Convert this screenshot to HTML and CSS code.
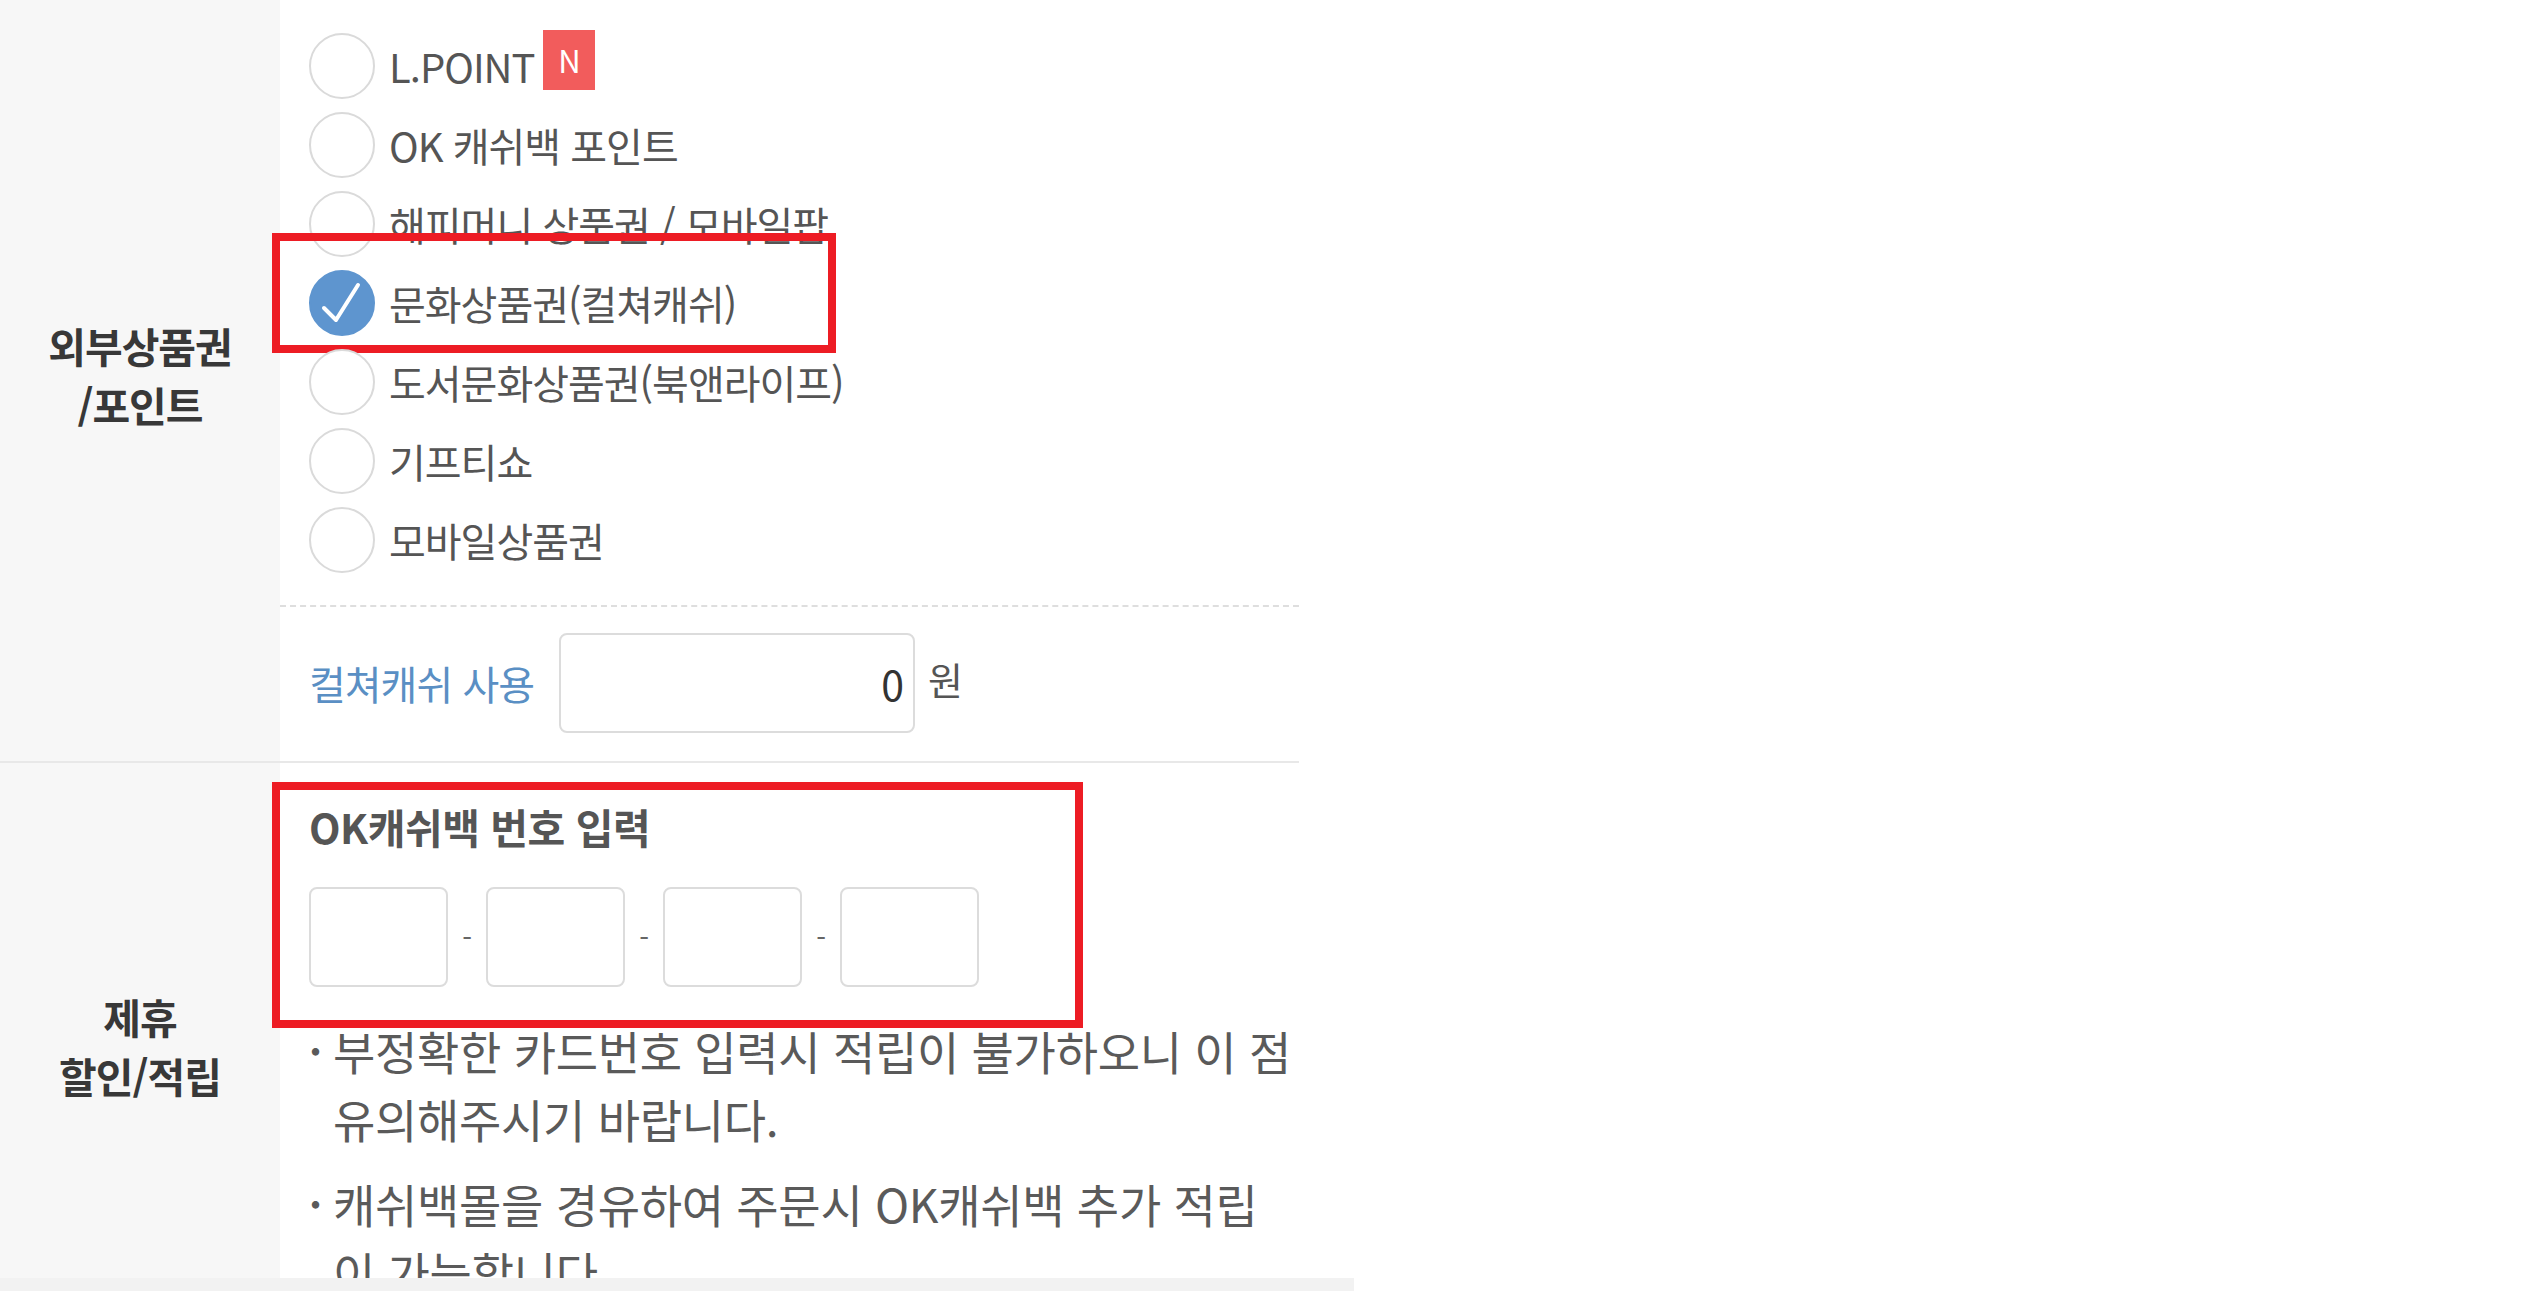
FILE: index.html
```html
<!DOCTYPE html>
<html lang="ko">
<head>
  <meta charset="UTF-8" />
  <meta name="viewport" content="width=device-width, initial-scale=1.0"/>
  <title>결제수단 선택</title>
  <link rel="stylesheet" href="styles.css">
</head>
<body>

<div class="page">
  <div class="row">
    <div class="row-label">외부상품권<br>/포인트</div>
    <div class="row-body">
      <ul class="pay-list">
        <li class="pay-opt"><span class="radio"></span>L.POINT<span class="badge-new">N</span></li>
        <li class="pay-opt"><span class="radio"></span>OK 캐쉬백 포인트</li>
        <li class="pay-opt"><span class="radio"></span>해피머니 상품권 / 모바일팝</li>
        <li class="pay-opt checked">
          <span class="radio">
            <svg viewBox="0 0 66 66" width="66" height="66"><path d="M15 38 L27 50 L49 15" fill="none" stroke="#fff" stroke-width="4" stroke-linecap="round" stroke-linejoin="round"/></svg>
          </span>문화상품권(컬쳐캐쉬)
          <span class="mark mark-pay"></span>
        </li>
        <li class="pay-opt"><span class="radio"></span>도서문화상품권(북앤라이프)</li>
        <li class="pay-opt"><span class="radio"></span>기프티쇼</li>
        <li class="pay-opt"><span class="radio"></span>모바일상품권</li>
      </ul>
      <div class="use-row">
        <span class="use-label">컬쳐캐쉬 사용</span>
        <input class="use-input" type="text" value="0">
        <span class="unit">원</span>
      </div>
    </div>
  </div>

  <div class="row">
    <div class="row-label">제휴<br>할인/적립</div>
    <div class="row-body cb-body">
      <div class="cb-block">
        <h3>OK캐쉬백 번호 입력</h3>
        <div class="cb-inputs">
          <input type="tel" maxlength="4">
          <span class="sep">-</span>
          <input type="tel" maxlength="4">
          <span class="sep">-</span>
          <input type="tel" maxlength="4">
          <span class="sep">-</span>
          <input type="tel" maxlength="4">
        </div>
        <span class="mark mark-cb"></span>
      </div>
      <ul class="notes">
        <li><span class="dot">·</span><span>부정확한 카드번호 입력시 적립이 불가하오니 이 점 유의해주시기 바랍니다.</span></li>
        <li><span class="dot">·</span><span>캐쉬백몰을 경유하여 주문시 OK캐쉬백 추가 적립이 가능합니다.</span></li>
      </ul>
    </div>
  </div>
</div>

<div class="bottom-bar"></div>

</body>
</html>
```

FILE: styles.css
```css
html, body {
  margin: 0; padding: 0;
  background: #fff;
  overflow: hidden;
}
body {
  font-family: "Noto Sans CJK KR", "Noto Sans", sans-serif;
  color: #555;
}
.page {
  width: 1299px;
}
.row {
  display: flex;
  border-bottom: 2px solid #e8e8e8;
}
.row-label {
  width: 280px;
  flex-shrink: 0;
  box-sizing: border-box;
  padding-bottom: 12px;
  background: #f7f7f7;
  display: flex;
  align-items: center;
  justify-content: center;
  text-align: center;
  font-size: 41px;
  font-weight: bold;
  letter-spacing: -1px;
  line-height: 59px;
  color: #383838;
}
.row-body {
  flex: 1;
  background: #fff;
}

/* payment options */
.pay-list {
  list-style: none;
  margin: 0;
  padding: 26px 0 26px 29px;
}
.pay-opt {
  position: relative;
  display: flex;
  align-items: center;
  height: 79px;
  font-size: 40px;
  letter-spacing: -1px;
  color: #555;
  white-space: nowrap;
}
.radio {
  width: 66px;
  height: 66px;
  box-sizing: border-box;
  border: 2px solid #dadada;
  border-radius: 50%;
  background: #fff;
  margin-right: 14px;
  flex-shrink: 0;
  display: flex;
}
.radio svg {
  margin: -2px;
}
.pay-opt.checked .radio {
  background: #5e95cf;
  border-color: #5e95cf;
}
.badge-new {
  margin-left: 9px;
  width: 52px;
  height: 60px;
  margin-top: -12px;
  background: #f25c5c;
  color: #fff;
  font-size: 31px;
  letter-spacing: 0;
  display: flex;
  align-items: center;
  justify-content: center;
}

/* culture cash amount */
.use-row {
  display: flex;
  align-items: center;
  border-top: 2px dashed #dedede;
  padding: 26px 0 28px 29px;
}
.use-label {
  font-size: 40px;
  letter-spacing: -1px;
  color: #5a8fc4;
  margin-right: 25px;
}
.use-input {
  width: 356px;
  height: 100px;
  box-sizing: border-box;
  border: 2px solid #dcdcdc;
  border-radius: 8px;
  padding: 0 9px 0 0;
  text-align: right;
  font-family: inherit;
  font-size: 41px;
  color: #333;
  outline: none;
}
.unit {
  margin-left: 13px;
  margin-bottom: 10px;
  font-size: 38px;
  color: #555;
}

/* OK cashback */
.cb-body {
  padding: 38px 0 36px 29px;
}
.cb-block {
  position: relative;
}
.cb-block h3 {
  margin: 0;
  font-size: 41px;
  line-height: 50px;
  letter-spacing: -0.5px;
  font-weight: bold;
  color: #555;
}
.cb-inputs {
  display: flex;
  align-items: center;
  margin-top: 36px;
}
.cb-inputs input {
  width: 139px;
  height: 100px;
  box-sizing: border-box;
  border: 2px solid #dcdcdc;
  border-radius: 8px;
  font-family: inherit;
  font-size: 36px;
  text-align: center;
  outline: none;
}
.sep {
  width: 38px;
  text-align: center;
  font-size: 28px;
  color: #666;
}
.notes {
  list-style: none;
  margin: 29px 0 0;
  padding: 0 4px 0 0;
}
.notes li {
  display: flex;
  font-size: 46px;
  line-height: 68px;
  letter-spacing: -0.3px;
  color: #5a5a5a;
}
.notes li + li {
  margin-top: 17px;
}
.notes .dot {
  width: 24px;
  flex-shrink: 0;
  font-size: 40px;
  font-weight: bold;
}

/* red highlight frames */
.mark {
  position: absolute;
  box-sizing: border-box;
  border: 8px solid #ed1c24;
  pointer-events: none;
}
.mark-pay {
  left: -37px;
  top: -30px;
  width: 564px;
  height: 120px;
}
.mark-cb {
  left: -37px;
  top: -19px;
  width: 811px;
  height: 246px;
}

.bottom-bar {
  position: fixed;
  left: 0;
  bottom: 0;
  width: 1354px;
  height: 13px;
  background: #f2f2f2;
}
```
